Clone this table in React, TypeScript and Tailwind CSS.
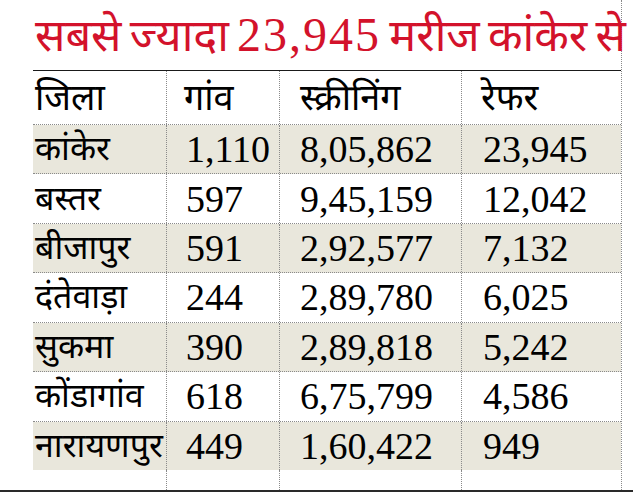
const rows = [
  { district: 'कांकेर', villages: '1,110', screening: '8,05,862', refer: '23,945' },
  { district: 'बस्तर', villages: '597', screening: '9,45,159', refer: '12,042' },
  { district: 'बीजापुर', villages: '591', screening: '2,92,577', refer: '7,132' },
  { district: 'दंतेवाड़ा', villages: '244', screening: '2,89,780', refer: '6,025' },
  { district: 'सुकमा', villages: '390', screening: '2,89,818', refer: '5,242' },
  { district: 'कोंडागांव', villages: '618', screening: '6,75,799', refer: '4,586' },
  { district: 'नारायणपुर', villages: '449', screening: '1,60,422', refer: '949' },
]

const cols = 'grid grid-cols-[134px_113px_182px_160px]'
const cell = 'flex items-center border-r border-dotted border-[#8a8a8a] leading-none overflow-hidden'

const App = () => {
  return (
    <div className="w-[633px] h-[492px] overflow-hidden bg-white flex flex-col font-['Liberation_Serif','Noto_Sans_Devanagari','Lohit_Devanagari',serif] text-black">
      <div className="ml-[33px] w-[589px] h-[490px] flex flex-col border-r border-dotted border-[#8a8a8a]">
        <div className="h-[71px] shrink-0 border-b border-[#1a1a1a] flex items-end pb-[11px] pl-[2px]">
          <h1 className="text-[#d3122b] text-[45px] leading-none whitespace-nowrap [word-spacing:-3px]">
            सबसे ज्यादा <span className="text-[48px] tracking-[2px]">23,945</span> मरीज कांकेर से
          </h1>
        </div>
        <div className={`${cols} h-[54px] shrink-0 border-b border-dotted border-[#8a8a8a] text-[36px]`}>
          <div className={`${cell} pl-[2px]`}>जिला</div>
          <div className={`${cell} pl-[17px]`}>गांव</div>
          <div className={`${cell} pl-[20px]`}>स्क्रीनिंग</div>
          <div className="flex items-center pl-[19px] leading-none">रेफर</div>
        </div>
        <div className="h-[345px] shrink-0 flex flex-col">
          {rows.map((r, i) => (
            <div
              key={r.district}
              className={`${cols} flex-1 basis-0 min-h-0 ${i % 2 === 0 ? 'bg-[#e9e7dc]' : 'bg-white'} ${i < rows.length - 1 ? 'border-b border-dotted border-[#8a8a8a]' : ''}`}
            >
              <div className={`${cell} pl-[2px] text-[34px] whitespace-nowrap`}>{r.district}</div>
              <div className={`${cell} pl-[19px] text-[38px]`}>{r.villages}</div>
              <div className={`${cell} pl-[20px] text-[38px]`}>{r.screening}</div>
              <div className="flex items-center pl-[21px] text-[38px] leading-none">{r.refer}</div>
            </div>
          ))}
        </div>
        <div className={`${cols} flex-1`}>
          <div className={cell}></div>
          <div className={cell}></div>
          <div className={cell}></div>
          <div></div>
        </div>
      </div>
      <div className="h-[2px] shrink-0 bg-[#2a2a2a]"></div>
    </div>
  )
}

export default App
